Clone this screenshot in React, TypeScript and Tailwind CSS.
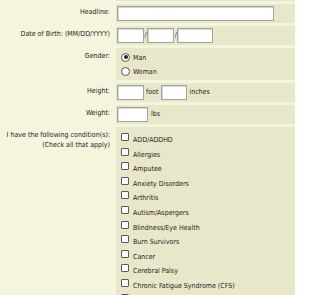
const conditions = [
  "ADD/ADDHD",
  "Allergies",
  "Amputee",
  "Anxiety Disorders",
  "Arthritis",
  "Autism/Aspergers",
  "Blindness/Eye Health",
  "Burn Survivors",
  "Cancer",
  "Cerebral Palsy",
  "Chronic Fatigue Syndrome (CFS)",
  "Crohn's Disease",
];

const Box = ({ w }: { w: string }) => (
  <span className={`block ${w} h-[15px] bg-white border border-[#a3a3a3] shadow-[inset_1px_1px_0_#d8d8d8]`} />
);

const Radio = ({ checked }: { checked?: boolean }) => (
  <span className="flex items-center justify-center w-[9px] h-[9px] rounded-full border border-[#555] bg-white shrink-0">
    {checked && <span className="w-[4px] h-[4px] rounded-full bg-[#222]" />}
  </span>
);

const Check = () => <span className="block w-[8px] h-[8px] border border-[#5a5a5a] bg-white rounded-[1px] shrink-0" />;

const Row = ({ label, children, h }: { label: React.ReactNode; children: React.ReactNode; h?: string }) => (
  <div className="flex mt-[3px]">
    <div className="w-[116px] shrink-0 pr-[6px] pt-[3px] flex flex-col items-end whitespace-nowrap leading-[10px]">{label}</div>
    <div className={`flex-1 bg-[#e9e7ca] px-[1px] py-[2px] ${h ?? ""}`}>{children}</div>
  </div>
);

export default function App() {
  return (
    <div
      className="w-[295px] h-[295px] overflow-hidden bg-[#f5f4dd] text-[#222] text-[7px]"
      style={{ fontFamily: '"DejaVu Sans Condensed", "DejaVu Sans", sans-serif' }}
    >
      <div className="-mt-[2px]">
        <div className="flex h-[3px]">
          <div className="w-[116px]" />
          <div className="flex-1 bg-[#e9e7ca]" />
        </div>

        <Row label="Headline:">
          <Box w="w-[157px]" />
        </Row>

        <Row label="Date of Birth: (MM/DD/YYYY)">
          <div className="flex items-center">
            <Box w="w-[27px]" />
            <span className="px-[0.5px]">/</span>
            <Box w="w-[27px]" />
            <span className="px-[0.5px]">/</span>
            <Box w="w-[36px]" />
          </div>
        </Row>

        <Row label="Gender:" h="h-[32px]">
          <div className="flex flex-col pl-[4px]">
            <label className="flex items-center gap-[3px] h-[14px]">
              <Radio checked />
              <span className="pt-[2px] leading-[9px]">Man</span>
            </label>
            <label className="flex items-center gap-[3px] h-[14px]">
              <Radio />
              <span className="pt-[2px] leading-[9px]">Woman</span>
            </label>
          </div>
        </Row>

        <Row label="Height:">
          <div className="flex items-center gap-[2px]">
            <Box w="w-[27px]" />
            <span className="pr-[1px]">foot</span>
            <Box w="w-[26px]" />
            <span>inches</span>
          </div>
        </Row>

        <Row label="Weight:">
          <div className="flex items-center gap-[3px]">
            <Box w="w-[31px]" />
            <span>lbs</span>
          </div>
        </Row>

        <Row
          label={
            <>
              <span>I have the following condition(s):</span>
              <span>(Check all that apply)</span>
            </>
          }
        >
          <div className="flex flex-col pt-[4px] pl-[4px]">
            {conditions.map((c) => (
              <label key={c} className="flex items-start gap-[4px] h-[14.6px]">
                <Check />
                <span className="pt-[3px] leading-[9px]">{c}</span>
              </label>
            ))}
          </div>
        </Row>
      </div>
    </div>
  );
}
